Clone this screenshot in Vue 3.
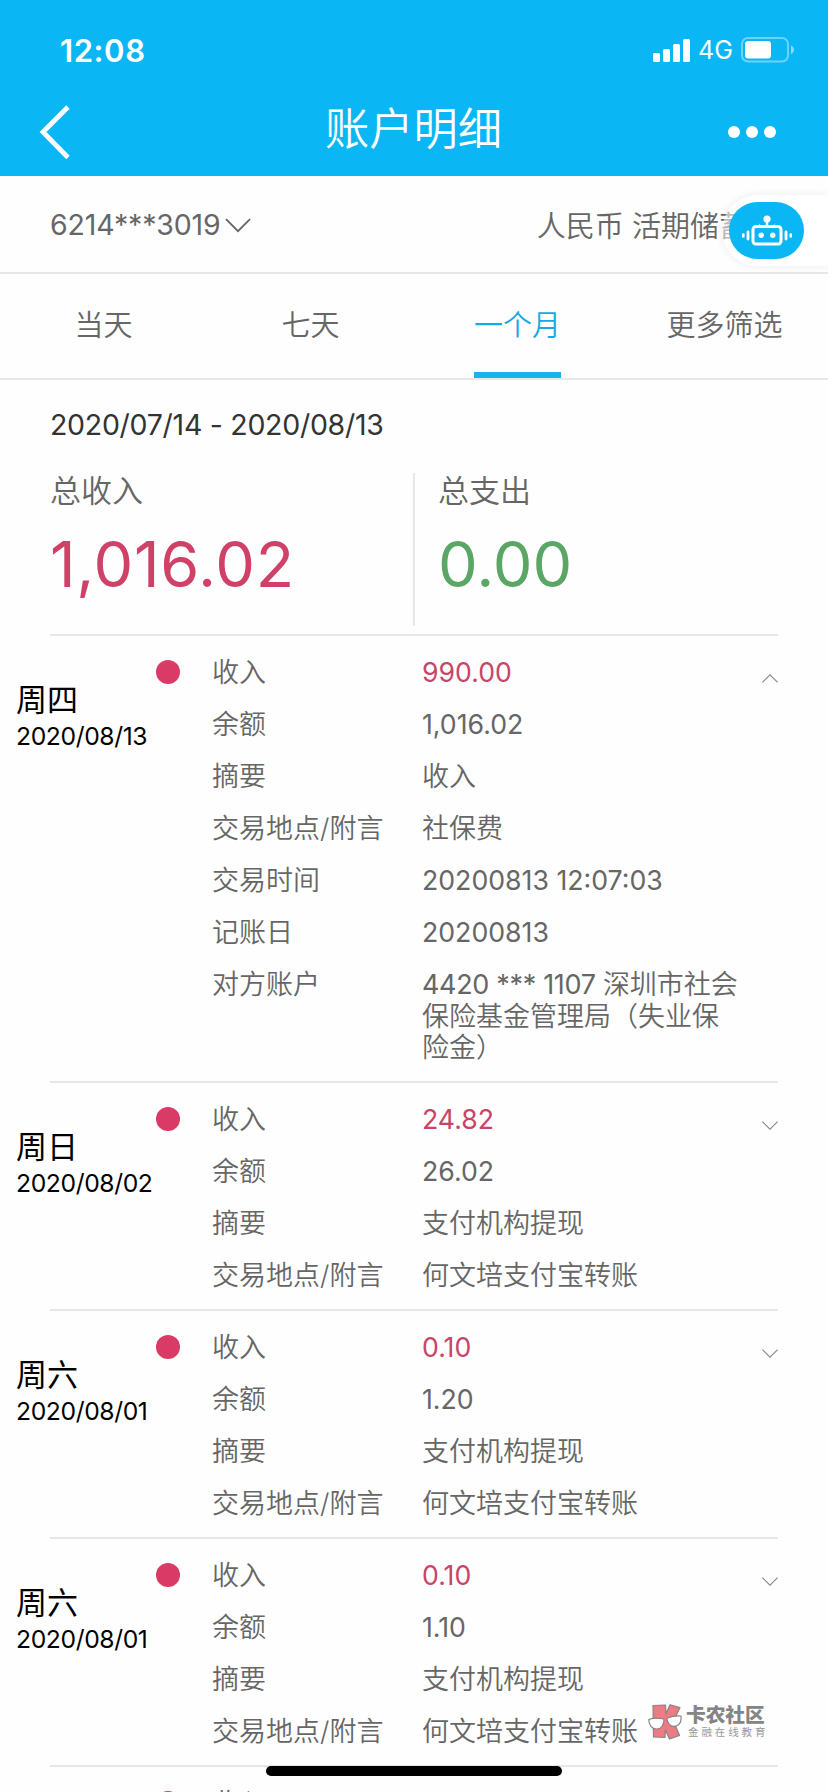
<script setup>
const tabs = ['当天', '七天', '一个月', '更多筛选']
const activeTab = 2

const small = (income, balance) => [
  { label: '收入', value: income, kind: 'num income' },
  { label: '余额', value: balance, kind: 'num' },
  { label: '摘要', value: '支付机构提现', kind: '' },
  { label: '交易地点/附言', value: '何文培支付宝转账', kind: '' },
]

const entries = [
  {
    day: '周四',
    date: '2020/08/13',
    open: true,
    rows: [
      { label: '收入', value: '990.00', kind: 'num income' },
      { label: '余额', value: '1,016.02', kind: 'num' },
      { label: '摘要', value: '收入', kind: '' },
      { label: '交易地点/附言', value: '社保费', kind: '' },
      { label: '交易时间', value: '20200813 12:07:03', kind: 'num' },
      { label: '记账日', value: '20200813', kind: 'num' },
      {
        label: '对方账户',
        prefix: '4420 *** 1107 ',
        value: '深圳市社会\n保险基金管理局（失业保\n险金）',
        kind: '',
      },
    ],
  },
  { day: '周日', date: '2020/08/02', open: false, rows: small('24.82', '26.02') },
  { day: '周六', date: '2020/08/01', open: false, rows: small('0.10', '1.20') },
  { day: '周六', date: '2020/08/01', open: false, rows: small('0.10', '1.10') },
  { day: '', date: '', open: false, rows: [{ label: '收入', value: '', kind: '' }] },
]
</script>

<template>
  <div class="screen">
    <header class="header">
      <div class="status">
        <span class="time">12:08</span>
        <svg class="signal" width="37" height="23" viewBox="0 0 37 23" fill="#fff">
          <rect x="0" y="14" width="7" height="9" rx="1.5" />
          <rect x="10" y="10" width="7" height="13" rx="1.5" />
          <rect x="20" y="5" width="7" height="18" rx="1.5" />
          <rect x="30" y="0" width="7" height="23" rx="1.5" />
        </svg>
        <span class="net">4G</span>
        <svg class="battery" width="54" height="26" viewBox="0 0 54 26">
          <rect x="1" y="1" width="46" height="23.5" rx="6" fill="none" stroke="#fff" stroke-opacity=".4" stroke-width="2" />
          <rect x="4" y="4" width="26" height="17.5" rx="3" fill="#fff" />
          <path d="M50 8.500c2 .8 3 2.400 3 4.300s-1 3.500-3 4.300z" fill="#fff" fill-opacity=".5" />
        </svg>
      </div>
      <div class="nav">
        <svg class="back" width="32" height="56" viewBox="0 0 32 56" fill="none" stroke="#fff" stroke-width="4.800">
          <path d="M29 3 4 28l25 25.500" />
        </svg>
        <h1 class="title">账户明细</h1>
        <svg class="more" width="48" height="12" viewBox="0 0 48 12" fill="#fff">
          <circle cx="6" cy="6" r="6" /><circle cx="24" cy="6" r="6" /><circle cx="42" cy="6" r="6" />
        </svg>
      </div>
    </header>

    <section class="account">
      <span class="card-no">6214***3019</span>
      <svg class="card-arrow" width="26" height="15" viewBox="0 0 26 15" fill="none" stroke="#666" stroke-width="1.800">
        <path d="M1 1.200 13 13.200 25 1.200" />
      </svg>
      <span class="card-type">人民币 活期储蓄</span>
      <div class="assist">
        <div class="assist-btn">
          <svg width="52" height="32" viewBox="0 0 52 32" fill="none" stroke="#fff" stroke-linecap="round">
            <circle cx="26" cy="4" r="3.600" fill="#fff" stroke="none" />
            <path d="M26 6v6" stroke-width="2.400" />
            <path d="m18 9 3 3M34 9l-3 3" stroke-width="1" opacity=".6" />
            <rect x="12" y="11.500" width="28" height="17.500" rx="3" stroke-width="3" />
            <circle cx="20.200" cy="20.200" r="2.700" fill="#fff" stroke="none" />
            <circle cx="31.800" cy="20.200" r="2.700" fill="#fff" stroke="none" />
            <path d="M7 17v7M45 17v7" stroke-width="2.800" />
            <path d="M2.300 19.500v2M49.700 19.500v2" stroke-width="2.600" />
          </svg>
        </div>
      </div>
    </section>

    <nav class="tabs">
      <div v-for="(t, i) in tabs" :key="t" class="tab">
        <span class="tab-text" :class="{ active: i === activeTab }">{{ t }}</span>
      </div>
    </nav>

    <section class="summary">
      <div class="range">2020/07/14 - 2020/08/13</div>
      <div class="totals">
        <div class="total">
          <div class="total-label">总收入</div>
          <div class="total-num red">1,016.02</div>
        </div>
        <div class="total second">
          <div class="total-label">总支出</div>
          <div class="total-num green">0.00</div>
        </div>
      </div>
    </section>

    <section v-for="(e, i) in entries" :key="i" class="entry">
      <div class="when">
        <div class="day">{{ e.day }}</div>
        <div class="date">{{ e.date }}</div>
      </div>
      <div class="dot"></div>
      <div class="rows">
        <div v-for="r in e.rows" :key="r.label" class="row">
          <span class="label">{{ r.label }}</span>
          <span class="value" :class="r.kind"><span v-if="r.prefix" class="prefix">{{ r.prefix }}</span>{{ r.value }}</span>
        </div>
      </div>
      <svg class="toggle" width="16" height="9" viewBox="0 0 16 9" fill="none" stroke="#888" stroke-width="1.100">
        <path :d="e.open ? 'M.4 8.400 8 .8l7.600 7.600' : 'M.4.6 8 8.200 15.600.6'" />
      </svg>
    </section>

    <div class="watermark">
      <svg width="34" height="36" viewBox="0 0 34 36" stroke="#858585" stroke-width="1.200" stroke-linejoin="round">
        <path d="M5 1.500 17.500 1l.5 9L22 .8 32 3.500 25.500 17l6 14.500L21.500 35l-4.200-9-.3 7.500L5.500 33z" fill="#ee7b84" />
        <path d="M.8 15.500C5 14 11 14 15.800 15c.5 6-2.800 10-7.300 10-4.700 0-7.700-4-7.700-9.500zM18.800 14.300c4.700-2 9.700-2.500 14.200-2.300.6 6-2 9.800-6.500 10.300-4.200.4-7.200-3-7.700-8z" fill="#fff" />
      </svg>
      <div class="wm-text">
        <div class="wm-name">卡农社区</div>
        <div class="wm-sub">金融在线教育</div>
      </div>
    </div>
    <div class="home"></div>
  </div>
</template>

<style>
body {
  background: #fefefe;
}
</style>

<style scoped>
.screen {
  position: relative;
  width: 828px;
  height: 1792px;
  overflow: hidden;
  background: #fefefe;
  font-family: Inter, 'Noto Sans CJK SC', sans-serif;
  color: #666;
  font-weight: 400;
}
.header {
  height: 176px;
  background: #0bb6f4;
  color: #fff;
}
.status {
  display: flex;
  align-items: center;
  height: 100px;
  padding: 0 33px 0 60px;
  box-sizing: border-box;
}
.time {
  flex: 1;
  font-size: 31px;
  font-weight: 600;
  letter-spacing: 0.6px;
}
.net {
  width: 35px;
  margin: 0 8px;
  font-size: 25px;
}
.battery,
.signal {
  flex: none;
}
.nav {
  display: flex;
  align-items: center;
  justify-content: space-between;
  height: 56px;
  margin-top: 4px;
  padding: 0 52px 0 39px;
}
.title {
  margin: -6px 0 0 28px;
  font-size: 44.300px;
  line-height: 56px;
  font-weight: 350;
}
.account {
  position: relative;
  display: flex;
  align-items: center;
  height: 96px;
  padding: 0 80px 0 50px;
  border-bottom: 2px solid #e6e7e7;
  font-size: 28.500px;
}
.card-no {
  width: 170px;
  letter-spacing: -0.15px;
  white-space: nowrap;
}
.card-arrow {
  flex: none;
  margin: 2px auto 0 5px;
}
.card-type {
  font-size: 29px;
  font-weight: 350;
  white-space: nowrap;
}
.assist {
  position: absolute;
  right: 0;
  top: 19px;
  width: 106px;
  height: 71px;
  box-sizing: border-box;
  padding: 7px;
  border-radius: 36px 0 0 36px;
  background: rgba(255, 255, 255, 0.6);
  background: linear-gradient(90deg, rgba(255, 255, 255, 0.55) 10px, #fff 60px);
  box-shadow: 0 0 8px rgba(0, 0, 0, 0.08);
}
.assist-btn {
  display: flex;
  align-items: center;
  justify-content: center;
  width: 75px;
  height: 57px;
  border-radius: 29px;
  background: #0bb6f4;
}
.tabs {
  display: grid;
  grid-template-columns: repeat(4, 1fr);
  height: 104px;
  border-bottom: 2px solid #e6e7e7;
}
.tab {
  display: flex;
  justify-content: center;
}
.tab-text {
  height: 98px;
  line-height: 104px;
  font-size: 29px;
  font-weight: 350;
}
.tab-text.active {
  color: #18a9e2;
  border-bottom: 6px solid #18b2ec;
}
.summary {
  margin: 0 50px;
  border-bottom: 2px solid #e6e7e7;
  height: 254px;
}
.range {
  height: 93px;
  line-height: 90px;
  font-size: 28.500px;
  letter-spacing: -0.280px;
  color: #333;
  white-space: nowrap;
}
.totals {
  display: flex;
  height: 153px;
}
.total {
  flex: none;
  width: 363px;
}
.second {
  box-sizing: border-box;
  border-left: 2px solid #e6e7e7;
  padding-left: 23px;
}
.total-label {
  height: 36px;
  line-height: 36px;
  font-size: 31px;
  font-weight: 350;
}
.total-num {
  height: 110px;
  line-height: 110px;
  font-size: 63px;
}
.red {
  color: #d04168;
  letter-spacing: 0.700px;
}
.green {
  color: #5aa664;
}
.entry {
  position: relative;
  display: flex;
  padding: 10px 50px 10px 16px;
}
.entry::after {
  content: '';
  position: absolute;
  left: 50px;
  right: 50px;
  bottom: 0;
  height: 2px;
  background: #e6e7e7;
}
.when {
  width: 140px;
  padding-top: 35px;
  color: #000;
  white-space: nowrap;
}
.day {
  height: 38px;
  line-height: 38px;
  font-size: 31px;
}
.date {
  height: 36px;
  line-height: 35px;
  font-size: 24.700px;
  letter-spacing: -0.400px;
}
.dot {
  width: 24px;
  height: 24px;
  margin: 14px 32px 0 0;
  border-radius: 50%;
  background: #d93a66;
}
.rows {
  flex: 1;
}
.row {
  display: grid;
  grid-template-columns: 210px 1fr;
  padding: 11.250px 0 9.250px;
  line-height: 31.500px;
  font-size: 27px;
}
.label,
.value {
  font-weight: 350;
}
.value {
  white-space: pre;
}
.prefix {
  font-weight: 400;
  letter-spacing: -0.330px;
}
.value.num {
  font-size: 26.700px;
  font-weight: 400;
}
.income {
  color: #c84469;
}
.toggle {
  flex: none;
  margin-top: 28px;
}
.watermark {
  position: absolute;
  left: 648px;
  top: 1704px;
  display: flex;
  gap: 4px;
  align-items: center;
}
.wm-name {
  font-size: 19.700px;
  line-height: 22px;
  font-weight: 900;
  color: #858585;
}
.wm-sub {
  padding: 0 0 0 2px;
  font-size: 10.500px;
  line-height: 14px;
  letter-spacing: 2.900px;
  color: #999;
}
.home {
  position: absolute;
  left: 266px;
  top: 1766px;
  width: 296px;
  height: 10px;
  border-radius: 5px;
  background: #000;
}
</style>
